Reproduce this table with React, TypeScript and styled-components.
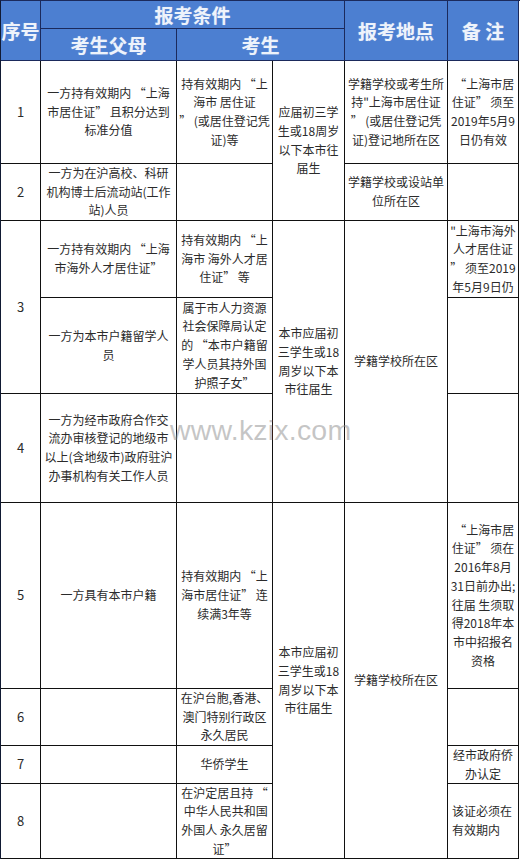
import React from "react";
import styled, { createGlobalStyle, css } from "styled-components";

const GlobalStyle = createGlobalStyle`
  html, body { margin: 0; padding: 0; background: #ffffff; }
  body { font-family: "Noto Sans CJK SC", "Noto Sans", sans-serif; }
`;

const Sheet = styled.div`
  position: relative;
  width: 520px;
  box-sizing: border-box;
  display: grid;
  grid-template-columns: 40px 136px 96px 72px 103px 71px;
  grid-template-rows: 28px 32px 103px 57px 77px 96px 109px 186px 57px 38px 75px;
  border-left: 1.5px solid #111a33;
  border-top: 1.5px solid #1b2a5c;
  background: #ffffff;
`;

type Place = {
  $col: number;
  $row: number;
  $colSpan?: number;
  $rowSpan?: number;
};

const placed = css<Place>`
  grid-column: ${(p) => p.$col} / span ${(p) => p.$colSpan ?? 1};
  grid-row: ${(p) => p.$row} / span ${(p) => p.$rowSpan ?? 1};
  box-sizing: border-box;
  overflow: hidden;
  display: flex;
  flex-direction: column;
  justify-content: center;
`;

const HeadCell = styled.div<Place>`
  ${placed};
  align-items: center;
  background: #4c7fd1;
  border-right: 1.5px solid #1b2a5c;
  border-bottom: 1.5px solid #1b2a5c;
  color: #eef3fb;
  font-size: 19px;
  font-weight: 700;
  line-height: 22px;
  white-space: pre;
  text-shadow: 0 0 1px rgba(255, 255, 255, 0.4);
`;

const BodyCell = styled.div<Place & { $left?: boolean }>`
  ${placed};
  align-items: ${(p) => (p.$left ? "flex-start" : "center")};
  text-align: ${(p) => (p.$left ? "left" : "center")};
  padding: ${(p) => (p.$left ? "0 0 0 4px" : "0")};
  border-right: 1.5px solid #111111;
  border-bottom: 1.5px solid #111111;
  color: #2b2b2b;
  font-size: 12px;
  line-height: 18.7px;
  white-space: pre;
`;

const Num = styled.span`
  font-size: 13px;
  color: #2b2b2b;
`;

const Line = styled.span`
  display: block;
`;

const Watermark = styled.div`
  position: absolute;
  left: 169px;
  top: 413px;
  font-family: "Liberation Sans", Arial, sans-serif;
  font-size: 28.5px;
  letter-spacing: 0.2px;
  color: rgba(140, 140, 140, 0.5);
  pointer-events: none;
  white-space: nowrap;
`;

type CellDef = {
  col: number;
  row: number;
  colSpan?: number;
  rowSpan?: number;
  lines?: string[];
  num?: string;
  left?: boolean;
};

const cells: CellDef[] = [
  // row 1
  { col: 1, row: 3, num: "1" },
  { col: 2, row: 3, lines: ["一方持有效期内 “上海", "市居住证” 且积分达到", "标准分值"] },
  { col: 3, row: 3, lines: ["持有效期内 “上", "海市 居住证", "” (或居住登记凭", "证)等"] },
  { col: 4, row: 3, rowSpan: 2, lines: ["应届初三学", "生或18周岁", "以下本市往", "届生"] },
  { col: 5, row: 3, lines: ["学籍学校或考生所", "持\"上海市居住证", "” (或居住登记凭", "证)登记地所在区"] },
  { col: 6, row: 3, lines: [" “上海市居", "住证” 须至", "2019年5月9", "日仍有效"] },
  // row 2
  { col: 1, row: 4, num: "2" },
  { col: 2, row: 4, lines: ["一方为在沪高校、科研", "机构博士后流动站(工作", "站)人员"] },
  { col: 3, row: 4 },
  { col: 5, row: 4, lines: ["学籍学校或设站单", "位所在区"] },
  { col: 6, row: 4 },
  // row 3
  { col: 1, row: 5, rowSpan: 2, num: "3" },
  { col: 2, row: 5, lines: ["一方持有效期内 “上海", "市海外人才居住证”"] },
  { col: 3, row: 5, lines: ["持有效期内 “上", "海市 海外人才居", "住证” 等"] },
  { col: 4, row: 5, rowSpan: 3, lines: ["本市应届初", "三学生或18", "周岁以下本", "市往届生"] },
  { col: 5, row: 5, rowSpan: 3, lines: ["学籍学校所在区"] },
  { col: 6, row: 5, lines: ["\"上海市海外", "人才居住证", "” 须至2019", "年5月9日仍"] },
  { col: 2, row: 6, lines: ["一方为本市户籍留学人", "员"] },
  { col: 3, row: 6, lines: ["属于市人力资源", "社会保障局认定", "的 “本市户籍留", "学人员其持外国", "护照子女”"] },
  { col: 6, row: 6 },
  // row 4
  { col: 1, row: 7, num: "4" },
  { col: 2, row: 7, lines: ["一方为经市政府合作交", "流办审核登记的地级市", "以上(含地级市)政府驻沪", "办事机构有关工作人员"] },
  { col: 3, row: 7 },
  { col: 6, row: 7 },
  // row 5
  { col: 1, row: 8, num: "5" },
  { col: 2, row: 8, lines: ["一方具有本市户籍"] },
  { col: 3, row: 8, lines: ["持有效期内 “上", "海市居住证” 连", "续满3年等"] },
  { col: 4, row: 8, rowSpan: 4, lines: ["本市应届初", "三学生或18", "周岁以下本", "市往届生"] },
  { col: 5, row: 8, rowSpan: 4, lines: ["学籍学校所在区"] },
  { col: 6, row: 8, lines: [" “上海市居", "住证” 须在", "2016年8月", "31日前办出;", "往届 生须取", "得2018年本", "市中招报名", "资格"] },
  // row 6
  { col: 1, row: 9, num: "6" },
  { col: 2, row: 9 },
  { col: 3, row: 9, lines: ["在沪台胞,香港、", "澳门特别行政区", "永久居民"] },
  { col: 6, row: 9 },
  // row 7
  { col: 1, row: 10, num: "7" },
  { col: 2, row: 10 },
  { col: 3, row: 10, lines: ["华侨学生"] },
  { col: 6, row: 10, lines: ["经市政府侨", "办认定"] },
  // row 8
  { col: 1, row: 11, num: "8" },
  { col: 2, row: 11 },
  { col: 3, row: 11, lines: ["在沪定居且持 “", " 中华人民共和国", "外国人 永久居留", "证”"] },
  { col: 6, row: 11, lines: ["该证必须在", "有效期内"], left: true },
];

export default function App() {
  return (
    <>
      <GlobalStyle />
      <Sheet>
        <HeadCell $col={1} $row={1} $rowSpan={2}>序号</HeadCell>
        <HeadCell $col={2} $row={1} $colSpan={3}>报考条件</HeadCell>
        <HeadCell $col={5} $row={1} $rowSpan={2}>报考地点</HeadCell>
        <HeadCell $col={6} $row={1} $rowSpan={2}>备 注</HeadCell>
        <HeadCell $col={2} $row={2}>考生父母</HeadCell>
        <HeadCell $col={3} $row={2} $colSpan={2}>考生</HeadCell>
        {cells.map((c, i) => (
          <BodyCell
            key={i}
            $col={c.col}
            $row={c.row}
            $colSpan={c.colSpan}
            $rowSpan={c.rowSpan}
            $left={c.left}
          >
            {c.num ? <Num>{c.num}</Num> : null}
            {c.lines?.map((l, j) => (
              <Line key={j}>{l}</Line>
            ))}
          </BodyCell>
        ))}
        <Watermark>www.kzix.com</Watermark>
      </Sheet>
    </>
  );
}
